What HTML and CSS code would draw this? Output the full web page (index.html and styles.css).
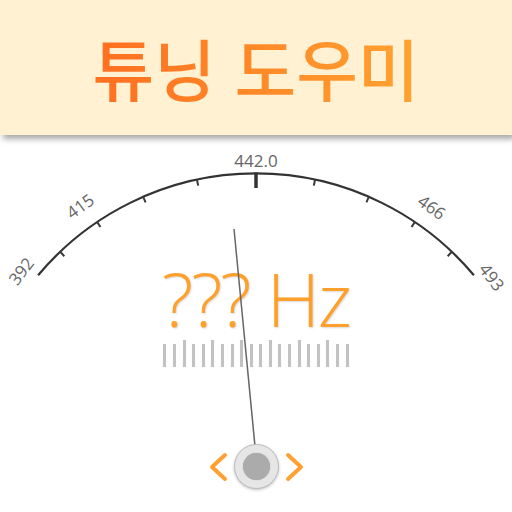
FILE: index.html
```html
<!DOCTYPE html>
<html lang="ko">
<head>
<meta charset="utf-8">
<title>튜닝 도우미</title>
<link rel="stylesheet" href="styles.css">
</head>
<body>
<header class="header">
  <h1 class="title">튜닝 도우미</h1>
</header>
<main class="stage">
  <div class="readout">??? Hz</div>
  <div class="scale">
    <span class="bar"></span><span class="bar"></span><span class="bar tall"></span>
    <span class="bar"></span><span class="bar"></span><span class="bar tall"></span>
    <span class="bar"></span><span class="bar"></span><span class="bar tall"></span>
    <span class="bar"></span><span class="bar"></span><span class="bar tall"></span>
    <span class="bar"></span><span class="bar"></span><span class="bar tall"></span>
    <span class="bar"></span><span class="bar"></span><span class="bar tall"></span>
    <span class="bar"></span><span class="bar"></span>
  </div>
  <div class="controls">
    <svg class="chev" width="20" height="32" viewBox="0 0 20 32"><polyline points="17,4 4,16 17,28"/></svg>
    <div class="knob"><div class="knob-dot"></div></div>
    <svg class="chev" width="20" height="32" viewBox="0 0 20 32"><polyline points="3,4 16,16 3,28"/></svg>
  </div>
  <svg class="dial" width="512" height="512" viewBox="0 0 512 512">
    <path class="arc" d="M 38.1 275.3 A 284 284 0 0 1 473.9 275.3"/>
    <g class="ticks">
      <line x1="196.95" y1="179.7" x2="198.2" y2="185.6"/>
      <line x1="143.2" y1="196.8" x2="145.6" y2="202.4"/>
      <line x1="97.2" y1="222.1" x2="100.5" y2="227.0"/>
      <line x1="60.2" y1="251.8" x2="64.3" y2="256.2"/>
      <line x1="315.05" y1="179.7" x2="313.8" y2="185.6"/>
      <line x1="368.8" y1="196.8" x2="366.4" y2="202.4"/>
      <line x1="414.8" y1="222.1" x2="411.5" y2="227.0"/>
      <line x1="451.8" y1="251.8" x2="447.7" y2="256.2"/>
    </g>
    <line class="center-tick" x1="256" y1="172.5" x2="256" y2="188"/>
    <g class="labels">
      <text x="256" y="160">442.0</text>
      <text x="80" y="206" transform="rotate(-36 80 206)">415</text>
      <text x="432" y="207" transform="rotate(36 432 207)">466</text>
      <text x="21" y="271" transform="rotate(-52 21 271)">392</text>
      <text x="492" y="277" transform="rotate(53 492 277)">493</text>
    </g>
    <line class="needle" x1="234" y1="229" x2="257" y2="467"/>
  </svg>
</main>
</body>
</html>
```
FILE: styles.css
```css
html, body {
  margin: 0;
  padding: 0;
  background: #ffffff;
}
body {
  width: 512px;
  height: 512px;
  overflow: hidden;
  font-family: "Open Sans", "Noto Sans", sans-serif;
}
.header {
  height: 135px;
  background: #fff1d1;
  box-shadow: 3px 4px 6px rgba(0, 0, 0, 0.35);
  display: flex;
  align-items: center;
  justify-content: center;
  position: relative;
  z-index: 2;
}
.title {
  margin: 0;
  font-family: "Noto Sans CJK KR", "Noto Sans", sans-serif;
  font-weight: 500;
  font-size: 67px;
  line-height: 1;
  letter-spacing: 0;
  background: linear-gradient(90deg, #ff6f20 0%, #ffa330 100%);
  -webkit-background-clip: text;
  background-clip: text;
  color: transparent;
  padding-bottom: 2px;
}
.stage {
  position: relative;
  height: 377px;
  display: flex;
  flex-direction: column;
  align-items: center;
}
.readout {
  margin-top: 127px;
  font-family: "Open Sans", sans-serif;
  font-weight: 300;
  font-size: 74px;
  line-height: 74px;
  letter-spacing: -2px;
  color: #ffa02c;
  text-shadow: 1px 1px 2px rgba(0, 0, 0, 0.15);
  white-space: nowrap;
}
.scale {
  margin-top: 4px;
  height: 27px;
  display: flex;
  align-items: flex-end;
  gap: 6.6px;
}
.bar {
  width: 3px;
  height: 23px;
  background: #c2c2c2;
  box-shadow: 0 0 1px rgba(0, 0, 0, 0.15);
}
.bar.tall {
  height: 27px;
}
.controls {
  margin-top: 77px;
  display: flex;
  align-items: center;
  gap: 6px;
  position: relative;
  z-index: 1;
}
.chev polyline {
  fill: none;
  stroke: #ffa030;
  stroke-width: 4;
  stroke-linecap: round;
  stroke-linejoin: round;
}
.knob {
  width: 43px;
  height: 43px;
  border-radius: 50%;
  background: #e6e6e6;
  border: 1px solid #bdbdbd;
  box-shadow: 0 1px 3px rgba(0, 0, 0, 0.25);
  display: flex;
  align-items: center;
  justify-content: center;
}
.knob-dot {
  width: 27px;
  height: 27px;
  border-radius: 50%;
  background: #ababab;
  box-shadow: 0 0 1px rgba(0, 0, 0, 0.3);
}
.dial {
  position: absolute;
  left: 0;
  top: -135px;
  pointer-events: none;
}
.arc {
  fill: none;
  stroke: #333333;
  stroke-width: 2.2;
}
.ticks line {
  stroke: #3a3a3a;
  stroke-width: 2;
}
.center-tick {
  stroke: #333333;
  stroke-width: 3.5;
}
.labels text {
  font-family: "Open Sans", sans-serif;
  font-size: 17px;
  fill: #666666;
  text-anchor: middle;
  dominant-baseline: central;
}
.needle {
  stroke: #666666;
  stroke-width: 1.5;
}
```
